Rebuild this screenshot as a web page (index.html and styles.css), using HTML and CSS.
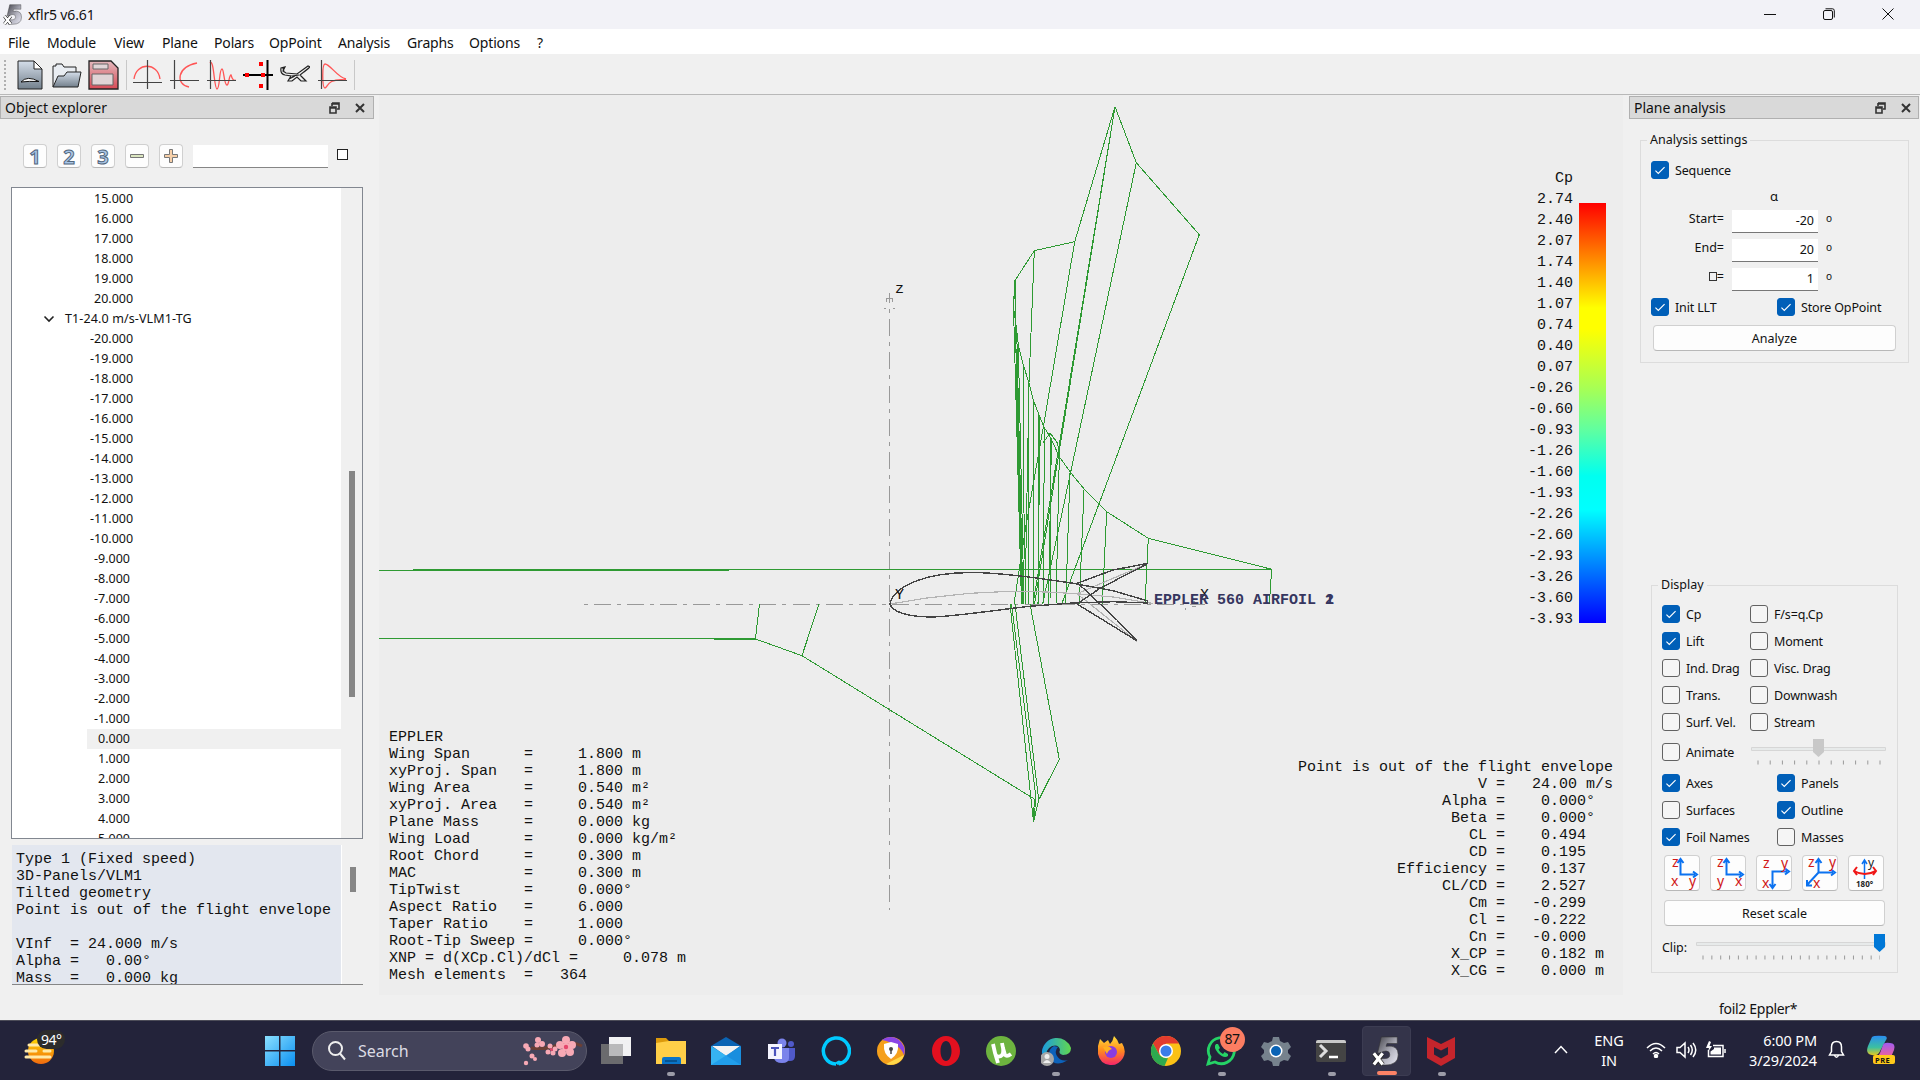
FILE: index.html
```html
<!DOCTYPE html>
<html lang="en">
<head>
<meta charset="utf-8">
<title>xflr5 v6.61</title>
<link rel="stylesheet" href="styles.css">
</head>
<body>
<svg class="defs" width="0" height="0">
  <defs>
    <linearGradient id="steel" x1="0" y1="0" x2="0" y2="1"><stop offset="0" stop-color="#d5deea"/><stop offset="1" stop-color="#73808c"/></linearGradient>
    <linearGradient id="rose" x1="0" y1="0" x2="0" y2="1"><stop offset="0" stop-color="#e3b9bd"/><stop offset="1" stop-color="#d84a56"/></linearGradient>
    <linearGradient id="silver" x1="0" y1="0" x2="1" y2="1"><stop offset="0" stop-color="#45454c"/><stop offset=".6" stop-color="#b8b8c4"/><stop offset="1" stop-color="#e8e8f4"/></linearGradient>
    <linearGradient id="win" x1="0" y1="0" x2="1" y2="1"><stop offset="0" stop-color="#8be0ff"/><stop offset="1" stop-color="#0a8ff0"/></linearGradient>
    <linearGradient id="sun" x1="0" y1="0" x2="0" y2="1"><stop offset="0" stop-color="#ffd800"/><stop offset="1" stop-color="#f06a10"/></linearGradient>
    <linearGradient id="edge" x1="0" y1="0" x2="1" y2="0"><stop offset="0" stop-color="#1a9be0"/><stop offset="1" stop-color="#62d84e"/></linearGradient>
    <linearGradient id="fire" x1="0" y1="0" x2="0" y2="1"><stop offset="0" stop-color="#ffe03a"/><stop offset=".5" stop-color="#ff8a1e"/><stop offset="1" stop-color="#f5246a"/></linearGradient>
    <linearGradient id="copA" x1="0" y1="0" x2="0" y2="1"><stop offset="0" stop-color="#2a8df0"/><stop offset=".6" stop-color="#3cc0a0"/><stop offset="1" stop-color="#e6c820"/></linearGradient>
    <linearGradient id="copB" x1="0" y1="0" x2="0" y2="1"><stop offset="0" stop-color="#a05cf0"/><stop offset="1" stop-color="#f0609a"/></linearGradient>
    <symbol id="float" viewBox="0 0 11 12"><path d="M3 1h7v6H8M3 1v3M3 2h7" fill="none" stroke="#333" stroke-width="1.6"/><path d="M1 5h6v6H1zM1 6h6" fill="none" stroke="#333" stroke-width="1.6"/></symbol>
    <symbol id="cross" viewBox="0 0 10 10"><path d="M1 1l8 8M9 1L1 9" stroke="#333" stroke-width="2" fill="none"/></symbol>
    <symbol id="logo5" viewBox="0 0 30 32"><path d="M10 1H27V8H16L15 11Q28 9 28 20Q28 31 14 31H8V24H14Q19 24 19 20Q19 16 15 16Q12 16 9 18H6Z" fill="url(#silver)" stroke="#333" stroke-width=".6"/><path d="M2 18.500L11.500 30.500M11.500 18.500L2 30.500" stroke="#222" stroke-width="5"/><path d="M2 18.500L11.500 30.500M11.500 18.500L2 30.500" stroke="#fff" stroke-width="3.400"/></symbol>
  </defs>
</svg>

<header class="titlebar">
  <svg class="app-icon" width="20" height="21" viewBox="0 0 30 32"><use href="#logo5"/></svg>
  <span class="app-title">xflr5 v6.61</span>
  <div class="win-controls">
    <svg width="12" height="12" viewBox="0 0 12 12"><path d="M0 6.500h12"/></svg>
    <svg width="12" height="12" viewBox="0 0 12 12"><rect x=".5" y="2.500" width="9" height="9" rx="1.500"/><path d="M2.500 .8H9.500Q11.300 .8 11.300 2.600V9.500"/></svg>
    <svg width="12" height="12" viewBox="0 0 12 12"><path d="M.5 .5l11 11M11.500 .5l-11 11"/></svg>
  </div>
</header>

<nav class="menubar">
  <span>File</span><span>Module</span><span>View</span><span>Plane</span><span>Polars</span><span>OpPoint</span><span>Analysis</span><span>Graphs</span><span>Options</span><span>?</span>
</nav>

<div class="toolbar">
  <i class="grip"></i>
  <svg class="tool" width="30" height="30" viewBox="0 0 30 30"><path d="M3 1H19L27 9V29H3Z" fill="url(#steel)" stroke="#222"/><path d="M19 1V9H27Z" fill="#fff" stroke="#222"/><path d="M6 22Q12 15 24 21.500Q14 21 6 22Z" fill="#fff" stroke="#111"/></svg>
  <svg class="tool" width="32" height="30" viewBox="0 0 32 30"><path d="M3 27V6H6V4H12L14 7H26V12" fill="#e9edf2" stroke="#222"/><path d="M3 27L8 16H14L17 12H31L28 27Z" fill="url(#steel)" stroke="#222"/></svg>
  <svg class="tool" width="32" height="30" viewBox="0 0 32 30"><path d="M2 1H24L31 8V29H2Z" fill="url(#rose)" stroke="#222" stroke-width="1.300"/><path d="M6 4H21V9H6ZM5 14H26V25H5Z" fill="#e0d4d6" stroke="#666"/></svg>
  <i class="tsep"></i>
  <svg class="tool ax" width="30" height="30" viewBox="0 0 30 30"><path class="r" d="M2 19C4 2 26 2 28 19"/><path d="M1 22.500H30M15.500 0V29"/></svg>
  <svg class="tool ax" width="30" height="30" viewBox="0 0 30 30"><path class="r" d="M28 3C8 7 6 24 20 27"/><path d="M1 20.500H30M5.500 0V29"/></svg>
  <svg class="tool ax" width="30" height="30" viewBox="0 0 30 30"><path class="r" d="M4 3C8 -2 8 29 11 29C14 29 13 9 16 9C18 9 18 25 21 25C23 25 23 15 25 15Q27 22 30 20"/><path d="M1 20.500H30M4.500 0V29"/></svg>
  <svg class="tool" width="30" height="30" viewBox="0 0 30 30"><path d="M0 15H30M24.500 0V30" stroke="#000" stroke-width="2"/><path d="M2 13h4v4H2zM18 13h4v4h-4zM16 2h4v4h-4zM16 24h4v4h-4z" fill="#f00"/></svg>
  <svg class="tool" width="30" height="30" viewBox="0 0 30 30"><path d="M1 8Q0 14 5 15L11 16L8 21L12 21L17 17L21 21L26 21L20 15L30 7L28 6L17 14L6 13L3 11L5 7ZM12 16L19 15M9 19L15 16M3 8L4 12M24 12L29 8" fill="none" stroke="#222" stroke-width="1.200"/></svg>
  <svg class="tool ax" width="30" height="30" viewBox="0 0 30 30"><path class="r" d="M29 19C20 17 13 4 8 4C5 4 5 28 8 28C11 28 9 18 29 20"/><path d="M1 20.500H30M4.500 0V29"/></svg>
  <i class="tsep last"></i>
</div>

<main class="work">
  <aside class="dock left">
    <div class="dock-title"><span>Object explorer</span><svg width="11" height="12"><use href="#float"/></svg><svg width="10" height="10"><use href="#cross"/></svg></div>
    <div class="explorer-tools">
      <button class="lvl">1</button><button class="lvl">2</button><button class="lvl">3</button>
      <button><svg width="16" height="16" viewBox="0 0 16 16"><path d="M1.500 6.500h13v3h-13z" fill="#dbe6c0" stroke="#777"/></svg></button>
      <button><svg width="16" height="16" viewBox="0 0 16 16"><path d="M6.500 1.500h3v5h5v3h-5v5h-3v-5h-5v-3h5z" fill="#f6cfa8" stroke="#777"/></svg></button>
      <span class="filter"></span><i class="plain-box"></i>
    </div>
    <div class="tree">
      <ul>
        <li>15.000</li><li>16.000</li><li>17.000</li><li>18.000</li><li>19.000</li><li>20.000</li>
        <li class="parent"><svg width="12" height="8" viewBox="0 0 12 8"><path d="M1.500 1.500L6 6L10.500 1.500"/></svg>T1-24.0 m/s-VLM1-TG</li>
        <li class="n2">-20.000</li><li class="n2">-19.000</li><li class="n2">-18.000</li><li class="n2">-17.000</li><li class="n2">-16.000</li><li class="n2">-15.000</li><li class="n2">-14.000</li><li class="n2">-13.000</li><li class="n2">-12.000</li><li class="n2">-11.000</li><li class="n2">-10.000</li>
        <li class="n1">-9.000</li><li class="n1">-8.000</li><li class="n1">-7.000</li><li class="n1">-6.000</li><li class="n1">-5.000</li><li class="n1">-4.000</li><li class="n1">-3.000</li><li class="n1">-2.000</li><li class="n1">-1.000</li>
        <li class="p1 current">0.000</li><li class="p1">1.000</li><li class="p1">2.000</li><li class="p1">3.000</li><li class="p1">4.000</li><li class="p1">5.000</li>
      </ul>
      <div class="scroll"><i class="thumb"></i></div>
    </div>
    <div class="info">
      <pre>Type 1 (Fixed speed)
3D-Panels/VLM1
Tilted geometry
Point is out of the flight envelope

VInf  = 24.000 m/s
Alpha =   0.00°
Mass  =   0.000 kg</pre>
      <div class="scroll"><i class="thumb"></i></div>
    </div>
  </aside>

  <section class="view">
    <svg class="plot" width="1244" height="899" viewBox="379 96 1244 899">
      <g class="axis">
        <path d="M583 604.500H1205" stroke-dasharray="17 6 4 6.150" stroke-dashoffset="22.500"/>
        <path d="M889.500 319V910" stroke-dasharray="17 6 4 6.300"/>
        <path d="M889.500 293V303M889.500 309V313M886.500 302V298.500H892.500V302M884 308.500H886M893 308.500H895M1192 606.500H1196M1198 603L1191 601M1185 608V610"/>
      </g>
      <g class="lift">
        <path d="M1014.700 281L1034.300 250.700L1074.700 241.700L1115 106.700L1136.300 162.700L1199.300 234.700L1061.700 604"/>
        <path d="M1136.300 162.700L1042.700 604M1115 106.700L1033 604M1115 106.700L1034.500 604M1074.700 241.700L1044 423L1025.700 527L1014 604M1034.300 250.700L1029 383L1025 604M1014.700 281L1016.700 390L1022.500 604"/>
        <path d="M1014.700 281L1013.500 307L1016.700 330L1018.300 345L1023.300 365L1029 383L1033.300 400L1039 415L1044 427L1050.700 438L1059.300 456.700L1070.700 472.700L1085 490L1106.700 511.700L1148.300 538.300L1271.700 569.300L1269.300 604"/>
        <path d="M1013.500 307L1021.500 604M1015.500 281V330L1023 604M1016.700 330L1023 604M1018.300 345L1024 604M1023.500 365V490L1026 604M1029 383L1028.500 604M1033.500 400V604M1039 415L1038 604M1039.500 415L1038.500 604M1044.500 427L1043 604M1050.500 438V598M1051.500 438L1048.500 604M1059.300 457L1056 604M1070 473L1065.700 604M1084 490L1079.300 604M1106.700 511.700L1102.300 604M1148.300 538.300L1145 604"/>
        <path d="M1043 443L1050 433L1057.500 443L1060 457"/>
        <path d="M379 570.500H729M413 569.500H1271M379 638.500H755.500L759.500 604M714 639.500H757L802 655.700L819 604M802 655.700L1034.300 799L1033.500 822"/>
        <path d="M1010 604L1033.500 822L1038.700 800L1059.300 759.300L1030 604M1011.500 604L1036 798L1033.500 822M1015 604L1038.700 800"/>
      </g>
      <g class="camber">
        <path d="M890 604L927 598L970 593.300L1010 591.300L1047 592L1077 593.700L1113 597L1153 603.500"/>
        <path d="M1077 593.700L1148.300 563.300M1077 593.700L1090 604L1137.300 641.700"/>
      </g>
      <g class="foil">
        <path d="M890 604C891 596 900 587 917 580.700C935 574 960 571.500 987 573C1020 575 1045 579 1073 583.300L1113 590.700L1148 601"/>
        <path d="M890 604C892 611 905 617 933 617C960 616 1010 608 1033 606L1073 603L1113 601.700L1148 603"/>
        <path d="M1077 583.300L1113 570L1148.300 563.300M1077 604L1100 588.300L1148.300 563.300M1078 583.300L1117 620L1136.700 640.700M1077 604L1136.700 640.700"/>
      </g>
      <g class="plot-text">
        <text x="895" y="293">z</text><text x="895" y="599">Y</text><text x="1200" y="599">X</text>
        <g class="foil-name"><text x="1154" y="604">EPPLER 560 AIRFOIL 1</text><text x="1325" y="604">2</text></g>
      </g>
    </svg>
    <pre class="wing-data">EPPLER
Wing Span      =     1.800 m
xyProj. Span   =     1.800 m
Wing Area      =     0.540 m²
xyProj. Area   =     0.540 m²
Plane Mass     =     0.000 kg
Wing Load      =     0.000 kg/m²
Root Chord     =     0.300 m
MAC            =     0.300 m
TipTwist       =     0.000°
Aspect Ratio   =     6.000
Taper Ratio    =     1.000
Root-Tip Sweep =     0.000°
XNP = d(XCp.Cl)/dCl =     0.078 m
Mesh elements  =   364</pre>
    <pre class="opp-data">Point is out of the flight envelope
                    V =   24.00 m/s
                Alpha =    0.000°
                 Beta =    0.000°
                   CL =    0.494
                   CD =    0.195
           Efficiency =    0.137
                CL/CD =    2.527
                   Cm =   -0.299
                   Cl =   -0.222
                   Cn =   -0.000
                 X_CP =    0.182 m
                 X_CG =    0.000 m</pre>
    <div class="legend">
      <pre>Cp
2.74
2.40
2.07
1.74
1.40
1.07
0.74
0.40
0.07
-0.26
-0.60
-0.93
-1.26
-1.60
-1.93
-2.26
-2.60
-2.93
-3.26
-3.60
-3.93</pre>
      <i class="ramp"></i>
    </div>
  </section>

  <aside class="dock right">
    <div class="dock-title"><span>Plane analysis</span><svg width="11" height="12"><use href="#float"/></svg><svg width="10" height="10"><use href="#cross"/></svg></div>
    <fieldset class="group analysis">
      <legend>Analysis settings</legend>
      <label class="ck on">Sequence</label>
      <div class="alpha">α</div>
      <div class="row"><span>Start=</span><b>-20</b><em>o</em></div>
      <div class="row"><span>End=</span><b>20</b><em>o</em></div>
      <div class="row"><span><i class="tofu"></i>=</span><b>1</b><em>o</em></div>
      <div class="pair"><label class="ck on">Init LLT</label><label class="ck on">Store OpPoint</label></div>
      <button class="wide">Analyze</button>
    </fieldset>
    <fieldset class="group display">
      <legend>Display</legend>
      <div class="grid-a">
        <label class="ck on">Cp</label><label class="ck">F/s=q.Cp</label>
        <label class="ck on">Lift</label><label class="ck">Moment</label>
        <label class="ck">Ind. Drag</label><label class="ck">Visc. Drag</label>
        <label class="ck">Trans.</label><label class="ck">Downwash</label>
        <label class="ck">Surf. Vel.</label><label class="ck">Stream</label>
      </div>
      <div class="animate"><label class="ck">Animate</label>
        <svg width="135" height="26" viewBox="0 0 135 26"><path class="track" d="M.5 8.500h134v3H.5z"/><path d="M62 0h11v13l-5.500 5l-5.500-5z" fill="#c8c8c8"/><path class="ticks" d="M6.500 23.500H129.500" stroke-dasharray="1 11.200"/></svg>
      </div>
      <div class="grid-b">
        <label class="ck on">Axes</label><label class="ck on">Panels</label>
        <label class="ck">Surfaces</label><label class="ck on">Outline</label>
        <label class="ck on">Foil Names</label><label class="ck">Masses</label>
      </div>
      <div class="views">
        <button><svg width="34" height="34" viewBox="0 0 34 34"><path d="M15.500 4V18.500H30M12.500 7L15.500 3L18.500 7M28 15.500L32 18.500L28 21.500"/><text x="7" y="11">z</text><text x="6" y="30">x</text><text x="24" y="30">y</text></svg></button>
        <button><svg width="34" height="34" viewBox="0 0 34 34"><path d="M15.500 4V18.500H30M12.500 7L15.500 3L18.500 7M28 15.500L32 18.500L28 21.500"/><text x="6" y="11">z</text><text x="6" y="30">y</text><text x="24" y="30">x</text></svg></button>
        <button><svg width="34" height="34" viewBox="0 0 34 34"><path d="M15.500 31V15.500H30M12.500 28L15.500 32L18.500 28M28 12.500L32 15.500L28 18.500"/><text x="6" y="12">z</text><text x="5" y="32">x</text><text x="24" y="12">y</text></svg></button>
        <button><svg width="34" height="34" viewBox="0 0 34 34"><path d="M15.500 4V16.500H30M15.500 16.500L4 29M12.500 7L15.500 3L18.500 7M28 13.500L32 16.500L28 19.500M4 24V29.500H9"/><text x="5" y="11">z</text><text x="10" y="32">x</text><text x="26" y="11">y</text></svg></button>
        <button><svg width="34" height="34" viewBox="0 0 34 34"><path class="thin" d="M15.500 5V23M13 8L15.500 4L18 8"/><path d="M5 15Q15.500 21 27 15M8 11L5 15L8 19M24 11L27 15L24 19" class="turn"/><text x="19" y="11" class="sm">y</text><text x="7" y="31" class="deg">180°</text></svg></button>
      </div>
      <button class="wide">Reset scale</button>
      <div class="clip"><span>Clip:</span>
        <svg width="190" height="26" viewBox="0 0 190 26"><path class="track" d="M.5 8.500h189v3H.5z"/><path d="M178 0h11v13l-5.500 5l-5.500-5z" fill="#0078d7"/><path class="ticks" d="M6.500 23.500H184" stroke-dasharray="1 7.850"/></svg>
      </div>
    </fieldset>
  </aside>
</main>

<div class="statusbar"><span>foil2 Eppler*</span></div>

<footer class="taskbar">
  <div class="weather">
    <svg width="56" height="40" viewBox="0 0 56 40"><circle cx="21" cy="21" r="13" fill="url(#sun)"/><path d="M9 15h15M6 21h10M24 21h6M6 27h24" stroke="#ffe9a8" stroke-width="3" stroke-linecap="round"/><rect x="17" y="0" width="28" height="19" rx="9.500" fill="#2c2c2c"/><text x="21" y="14.500" class="temp">94°</text></svg>
  </div>
  <svg class="start" width="30" height="30" viewBox="0 0 30 30"><path d="M0 0h14v14H0zM15.500 0H30v14H15.500zM0 15.500h14V30H0zM15.500 15.500H30V30H15.500z" fill="url(#win)"/></svg>
  <div class="search">
    <svg width="20" height="20" viewBox="0 0 20 20"><circle cx="8.500" cy="7.500" r="6.500" fill="none" stroke="#eee" stroke-width="2"/><path d="M13 12.500L18 18.500" stroke="#eee" stroke-width="2"/></svg>
    <span>Search</span>
    <svg width="62" height="32" viewBox="0 -1 62 32"><path d="M9 12Q24 14 36 9T60 10" stroke="#6b3f35" stroke-width="3" fill="none"/><g fill="#f7a9b5"><circle cx="4" cy="10" r="2.800"/><circle cx="6" cy="13" r="2.500"/><circle cx="16" cy="4" r="3"/><circle cx="20" cy="8" r="3"/><circle cx="15" cy="9" r="2.500"/><circle cx="28" cy="10" r="2.500"/><circle cx="33" cy="13" r="2.500"/><circle cx="31" cy="17" r="2.500"/><circle cx="26" cy="16" r="2.500"/><circle cx="44" cy="4" r="4"/><circle cx="50" cy="9" r="4"/><circle cx="48" cy="16" r="4"/><circle cx="40" cy="17" r="4"/><circle cx="38" cy="9" r="4"/><circle cx="44" cy="11" r="4"/><circle cx="10" cy="20" r="2.500"/><circle cx="13" cy="23" r="2"/><circle cx="4" cy="27" r="2.200"/></g><circle cx="44" cy="11" r="2.200" fill="#e5476c"/><circle cx="29.500" cy="13.500" r="1.500" fill="#e5476c"/></svg>
  </div>
  <div class="apps">
    <span class="app"><svg viewBox="0 0 30 30"><path d="M0 8h22v20H0z" fill="#6b6b6e"/><path d="M8 1h22v19H8z" fill="#f1f1f3"/><path d="M8 8h14v12H8z" fill="#b9b9bb"/></svg></span>
    <span class="app run"><svg viewBox="0 0 30 30"><path d="M0 2h10l3 3h17v5H0z" fill="#dc9a0c"/><path d="M0 7l13-2h17v23H0z" fill="#ffcf48"/><path d="M6 28v-5q0-2 2-2h15q2 0 2 2v5z" fill="#0a74c8"/><path d="M9 25h12" stroke="#064a80" stroke-width="1.500"/></svg></span>
    <span class="app"><svg viewBox="0 0 30 30"><path d="M0 10L15 1L30 10V29H0z" fill="#0b64b4"/><path d="M1 10H29L15 20z" fill="#f3f3f3"/><path d="M0 10L30 29H0z" fill="#36b4f2"/><path d="M30 10L0 29H30z" fill="#1d98e8" opacity=".8"/></svg></span>
    <span class="app"><svg viewBox="0 0 30 30"><circle cx="16" cy="7" r="4.500" fill="#7b83eb"/><circle cx="25" cy="8" r="3" fill="#5059c9"/><path d="M20 12h9v8q0 5-5 5h-4z" fill="#5059c9"/><path d="M8 12h15v10q0 5-7 5t-8-5z" fill="#7b83eb"/><path d="M2 8h14v15H2z" fill="#f4f4ff"/><path d="M5 12h8M9 12v8" stroke="#4b53bc" stroke-width="2.200"/></svg></span>
    <span class="app"><svg viewBox="0 0 30 30"><path d="M15 28A13 13 0 1 1 19 27.500Q18 25 15.500 28" fill="none" stroke="#00caff" stroke-width="3.500"/></svg></span>
    <span class="app"><svg viewBox="0 0 30 30"><circle cx="15" cy="15" r="14" fill="#f5a01c"/><path d="M6 4A14 14 0 0 1 28 19Q24 8 6 4z" fill="#8a45e6"/><path d="M28 19A14 14 0 0 1 10 28Z" fill="#ffd84a"/><path d="M8 8L15 6L22 8Q23 18 15 23Q7 18 8 8z" fill="#fff"/><circle cx="15" cy="13" r="2" fill="#444"/><path d="M15 13v5" stroke="#444" stroke-width="1.500"/></svg></span>
    <span class="app"><svg viewBox="0 0 30 30"><path fill-rule="evenodd" d="M15 0C23 0 29 7 29 15S23 30 15 30S1 23 1 15S7 0 15 0ZM15 5C12 5 9.500 9 9.500 15S12 25 15 25S20.500 21 20.500 15S18 5 15 5Z" fill="#e3101f"/></svg></span>
    <span class="app"><svg viewBox="0 0 30 30"><circle cx="15" cy="15" r="15" fill="#6db33f"/><path d="M7 8L9 17Q10 22 15 20Q18 18 17 12L16 7M17 12L19 19Q21 21 25 18M9 17L12 27" stroke="#fff" stroke-width="3.800" fill="none"/></svg></span>
    <span class="app run"><svg viewBox="0 0 30 30"><path d="M1 15A15 15 0 0 1 30 12Q30 19 22 19Q17 18 19 14Q18 8 11 10Q4 13 6 22Q0 19 1 15z" fill="url(#edge)"/><path d="M13 10Q6 14 9 22Q14 32 27 24Q20 26 16 20Q13 15 17 11z" fill="#0d62ba"/><circle cx="6" cy="23" r="7" fill="#a7a7a7"/><circle cx="6" cy="20.500" r="2.500" fill="#eee"/><path d="M2 27q4-6 8 0z" fill="#eee"/></svg></span>
    <span class="app"><svg viewBox="0 0 30 30"><path d="M2 10L4 3L8 7L12 4L14 8Q17 5 18 0Q22 4 23 8L26 7Q31 15 27 22Q22 30 14 29Q4 28 2 18z" fill="url(#fire)"/><circle cx="15" cy="16" r="6" fill="#8a3ce0"/><path d="M7 11Q13 9 16 13Q12 14 11 18Q9 15 7 11z" fill="#ffb020"/></svg></span>
    <span class="app"><svg viewBox="0 0 30 30"><circle cx="15" cy="15" r="15" fill="#fbc116"/><path d="M2 7.500A15 15 0 0 1 28 7.500H15L8.500 19z" fill="#e33b2e"/><path d="M2 7.500L8.500 19Q12 23 17 22L13.500 30A15 15 0 0 1 2 7.500z" fill="#2da94f"/><circle cx="15" cy="15" r="7" fill="#fff"/><circle cx="15" cy="15" r="5.500" fill="#3b7de8"/></svg></span>
    <span class="app run"><svg viewBox="0 0 30 30"><path d="M2 28L4 21A13 13 0 1 1 9 26z" fill="none" stroke="#25d366" stroke-width="2.800"/><path d="M10 8Q7 11 12 17Q18 23 22 20L22 18L18.500 16L17 18Q14 17 12.500 13.500L14 12L12 8z" fill="#25d366"/></svg><em>87</em></span>
    <span class="app"><svg viewBox="0 0 30 30"><path d="M12 1h6l1 4l4 2l4-1l3 5l-3 3v3l3 3l-3 5l-4-1l-4 2l-1 4h-6l-1-4l-4-2l-4 1l-3-5l3-3v-3L0 11l3-5l4 1l4-2z" fill="#76828d"/><circle cx="15" cy="15" r="6.500" fill="#fff"/><circle cx="15" cy="15" r="5" fill="#0a63b5"/></svg></span>
    <span class="app run"><svg viewBox="0 0 30 30"><rect y="4" width="30" height="22" rx="2" fill="#444"/><path d="M0 6q0-2 2-2h26q2 0 2 2v1H0z" fill="#c9c9c9"/><path d="M4 9l6 6l-6 6" stroke="#ddd" stroke-width="3" fill="none"/><path d="M13 21h9" stroke="#fff" stroke-width="2.500"/></svg></span>
    <span class="app active"><svg viewBox="0 0 30 32"><use href="#logo5"/></svg></span>
    <span class="app run"><svg viewBox="0 0 30 30"><path d="M1 1L15 8L29 1V22L15 30L1 22zM8 11V18.500L15 22.500L22 18.500V11L15 14.500z" fill="#c5252c" fill-rule="evenodd"/></svg></span>
  </div>
  <div class="tray">
    <svg class="caret" width="14" height="9" viewBox="0 0 14 9"><path d="M1 8L7 1.500L13 8"/></svg>
    <div class="lang">ENG<br>IN</div>
    <svg class="wifi" width="20" height="16" viewBox="0 0 20 16"><path d="M1 6Q10 -3 19 6M4 9Q10 3 16 9M7 12Q10 9 13 12"/><circle cx="10" cy="14" r="1.500" fill="#fff"/></svg>
    <svg class="vol" width="21" height="18" viewBox="0 0 21 18"><path d="M1 6.500H4L9 2V16L4 11.500H1zM12 6Q14 9 12 12M14.500 4Q18 9 14.500 14M17 2Q22.500 9 17 16"/></svg>
    <svg class="bat" width="21" height="17" viewBox="0 0 21 17"><path d="M7 4.500H17V15.500H2.500V9M19 8V12"/><path d="M8 6.500h7v7H4.500V10.500L8 8zM3 0L0 7H3L2 11L6 5H3.500L5 1z" fill="#fff" stroke="none"/></svg>
    <div class="clock">6:00 PM<br>3/29/2024</div>
    <svg class="bell" width="17" height="19" viewBox="0 0 17 19"><path d="M1.500 15H15.500L13.500 11.500V7Q13.500 1.500 8.500 1.500T3.500 7V11.500zM6.500 15.500Q8.500 19 10.500 15.500"/></svg>
    <svg class="cop" width="30" height="30" viewBox="0 0 30 30"><path d="M6 2Q8 0 19 1Q22 2 20 5L13 18Q11 21 6 20Q-1 19 2 11z" fill="url(#copA)"/><path d="M17 10Q18 7 24 8Q30 8 28 15L25 22H10Q13 21 14 18z" fill="url(#copB)"/><rect x="7" y="20" width="22" height="9" rx="2" fill="#ffc91a"/><text x="9" y="27.500" class="pre">PRE</text></svg>
  </div>
</footer>
</body>
</html>
```
FILE: styles.css
```css
* { box-sizing: border-box; }
body { margin: 0; width: 1920px; height: 1080px; overflow: hidden; display: flex; flex-direction: column; background: #f0f0f0; color: #111; font-family: "Noto Sans", "Open Sans", sans-serif; font-size: 12.5px; }
pre { margin: 0; font: 15px/17px "Liberation Mono", monospace; }
button { padding: 0; border: 1px solid #d0d0d0; border-bottom-color: #b8b8b8; border-radius: 4px; background: #fdfdfd; font: inherit; color: #111; display: flex; align-items: center; justify-content: center; }
svg { display: block; flex: none; }
.defs { position: absolute; }

.titlebar { height: 29px; flex: none; background: #f2f2f7; display: flex; align-items: center; padding: 0 26px 1px 3px; }
.app-title { font-size: 14px; margin-left: 5px; letter-spacing: -.15px; }
.win-controls { margin-left: auto; display: flex; gap: 47px; }
.win-controls svg { fill: none; stroke: #111; stroke-width: 1; }
.menubar { height: 26px; flex: none; background: #fff; border-bottom: 1px solid #f0f0f0; padding-left: 8px; display: grid; grid-template-columns: 39px 67px 48px 52px 55px 69px 69px 62px 68px 20px; font-size: 14px; line-height: 27px; letter-spacing: -.15px; white-space: nowrap; }
.toolbar { height: 40px; flex: none; border-bottom: 1px solid #b8b8b8; display: flex; align-items: center; background: #f0f0f0; }
.grip { width: 2px; height: 30px; margin: 0 9px 0 4px; background: repeating-linear-gradient(#b0b0b0 0 2px, transparent 2px 4px); }
.tool { margin-right: 7px; fill: none; }
.tool:nth-of-type(1) { margin-right: 5px; }
.tool:nth-of-type(2) { margin-right: 5px; }
.ax path { fill: none; stroke: #444; stroke-width: 1.2; }
.ax .r { stroke: #f55; stroke-width: 1.3; }
.tsep { width: 1px; height: 30px; background: #c8c8c8; margin-right: 5px; }
.tsep.last { margin: 0; }

.work { height: 900px; flex: none; display: flex; }
.dock { padding-top: 1px; }
.left { width: 379px; }
.dock-title { height: 23px; border: 1px solid #b0b0b0; background: #d9d9d9; display: flex; align-items: center; padding: 0 8px 0 4px; font-size: 14px; letter-spacing: .05px; }
.left .dock-title { width: 374px; }
.dock-title span { flex: 1; }
.dock-title svg + svg { margin-left: 15px; }
.explorer-tools { display: flex; align-items: center; margin: 25px 0 0 23px; gap: 10px; height: 24px; }
.explorer-tools button { width: 24px; height: 24px; }
.explorer-tools .lvl { font: bold 20px "Noto Sans", sans-serif; color: #a9c6e8; -webkit-text-stroke: 1px #53677d; }
.filter { width: 135px; height: 23px; background: #fff; border-bottom: 1px solid #868686; }
.plain-box { width: 11px; height: 11px; border: 1px solid #222; margin: 0 0 3px -1px; background: #fff; }

.tree { margin: 19px 0 0 11px; width: 352px; height: 652px; border: 1px solid #828790; background: #fff; display: flex; overflow: hidden; }
.tree ul { margin: 0; padding: 1px 0 0; list-style: none; flex: 1; }
.tree li { height: 20px; line-height: 20px; padding-left: 7px; margin-left: 75px; letter-spacing: 0; white-space: nowrap; }
.tree .n2 { padding-left: 3px; }
.tree .n1 { padding-left: 7px; }
.tree .p1 { padding-left: 11px; }
.tree .current { background: #f0f0f0; }
.tree .parent { margin-left: 31px; padding: 0; display: flex; align-items: center; gap: 10px; letter-spacing: .12px; }
.parent svg { fill: none; stroke: #222; stroke-width: 1.6; }
.scroll { width: 21px; background: #f0f0f0; padding-left: 8px; }
.thumb { display: block; width: 6px; background: #868686; }
.tree .thumb { margin-top: 283px; height: 226px; }
.info { margin: 6px 0 0 12px; width: 351px; height: 140px; border-bottom: 1px solid #868686; display: flex; overflow: hidden; background: #e3e7ef; }
.info pre { flex: 1; padding: 6px 0 0 4px; }
.info .scroll { width: 22px; border-left: 1px solid #fff; }
.info .thumb { margin-top: 22px; height: 25px; }

.view { width: 1244px; height: 900px; background: #ededed; position: relative; }
.plot { position: absolute; left: 0; top: 1px; }
.plot path { fill: none; stroke-width: 1; shape-rendering: crispEdges; }
.plot .axis path { stroke: #999; }
.plot .lift path { stroke: #2e9a33; }
.plot .foil path { stroke: #444; stroke-width: 1.4; }
.plot .camber path { stroke: #b4b4b4; stroke-width: 1.2; }
.plot-text { font: 15px "Liberation Mono", monospace; fill: #111; }
.foil-name { font-weight: bold; fill: #36365f; }
.wing-data { position: absolute; left: 10px; bottom: 11px; }
.opp-data { position: absolute; left: 919px; bottom: 15px; }
.legend { position: absolute; right: 17px; top: 73px; display: flex; gap: 6px; }
.legend pre { line-height: 21px; text-align: right; }
.ramp { width: 27px; height: 420px; margin-top: 35px; background: linear-gradient(#f00, #ff9000 14%, #ff0 25%, #ff0 30%, #a8ff54 44%, #60ffa0 54%, #00fff0 65%, #0ff 73%, #00f); }

.right { width: 297px; padding-left: 6px; }
.right .dock-title { margin-right: 1px; padding-right: 7px; letter-spacing: -.05px; }
.group { position: relative; border: 1px solid #dcdcdc; margin: 0; padding: 0; min-width: 0; }
.group legend { position: absolute; top: -10px; left: 6px; padding: 0 3px; background: #f0f0f0; line-height: 18px; }
.ck { display: flex; align-items: center; gap: 6px; height: 16px; white-space: nowrap; letter-spacing: -.15px; }
.ck::before { content: ""; width: 16px; height: 16px; flex: none; border: 1px solid #626262; border-radius: 3px; background: #f5f5f5; }
.ck.on::before { border-color: #005fb8; background: #005fb8 url("data:image/svg+xml,%3Csvg xmlns='http://www.w3.org/2000/svg' viewBox='0 0 14 14'%3E%3Cpath d='M3 7.500l2.500 2.500L11 4.500' fill='none' stroke='white'/%3E%3C/svg%3E"); }
.analysis { margin: 21px 0 0 11px; width: 269px; height: 223px; padding: 21px 11px 0 10px; }
.alpha { text-align: center; height: 20px; line-height: 20px; margin: 8px 0 4px; font-size: 13px; }
.row { display: grid; grid-template-columns: 73px 86px 10px; column-gap: 8px; height: 22px; margin-bottom: 7px; }
.row span { text-align: right; line-height: 17px; }
.row b { font-weight: normal; background: #fff; border-bottom: 1px solid #777; text-align: right; line-height: 22px; padding-right: 4px; }
.row em { font-style: normal; font-size: 10px; line-height: 17px; }
.tofu { display: inline-block; width: 8px; height: 9px; border: 1px solid #333; }
.pair { display: grid; grid-template-columns: 126px 1fr; margin-top: 9px; }
.wide { width: 100%; height: 26px; }
.analysis .wide { width: 243px; margin: 10px 0 0 2px; }
.display { margin: 222px 0 0 22px; width: 247px; height: 388px; padding: 20px 11px 0 10px; }
.grid-a { display: grid; grid-template-columns: 88px 1fr; row-gap: 11px; }
.grid-b { display: grid; grid-template-columns: 115px 1fr; row-gap: 11px; margin-top: 10px; }
.animate { display: flex; justify-content: space-between; margin-top: 9px; height: 26px; }
.animate .ck { margin-top: 5px; }
.track { fill: #e7eaea; stroke: #d6d6d6; }
.ticks { stroke: #999; stroke-width: 4; }
.views { display: flex; gap: 10px; margin: 10px 0 0 2px; }
.views button { width: 36px; height: 36px; }
.views svg { overflow: visible; }
.views path { fill: none; stroke: #0b72f0; stroke-width: 2; }
.views .turn { stroke: #f01818; }
.views .thin { stroke-width: 1.5; }
.views text { font: 14px "Noto Sans", sans-serif; fill: #d01818; }
.views .sm { fill: #222; font-size: 12px; }
.views .deg { font-size: 8px; font-weight: bold; fill: #222; }
.display .wide { width: 221px; margin: 9px 0 0 2px; }
.clip { display: flex; justify-content: space-between; margin-top: 8px; }
.clip span { line-height: 28px; letter-spacing: -.1px; }
.statusbar { height: 25px; flex: none; padding-left: 1719px; font-size: 14px; line-height: 28px; letter-spacing: -.3px; }

.taskbar { height: 60px; flex: none; background: #23233a; border-top: 1px solid #4c4c58; display: flex; align-items: center; color: #fff; position: relative; }
.weather { width: 265px; padding-left: 20px; align-self: flex-start; margin-top: 9px; }
.temp { font: 14px "Noto Sans", sans-serif; fill: #fff; letter-spacing: -.5px; }
.search { margin-left: 17px; width: 275px; height: 40px; border-radius: 20px; background: #43435a; border: 1px solid #5a5a6c; display: flex; align-items: center; padding: 0 2px 0 14px; color: #dcdce4; font-size: 16px; }
.search span { flex: 1; margin-left: 11px; }
.apps { display: flex; margin-left: 1px; }
.app { position: relative; width: 55.05px; height: 50px; display: flex; align-items: center; justify-content: center; }
.app svg { width: 30px; height: 30px; }
.run::after { content: ""; position: absolute; bottom: 0; left: 24px; width: 8px; height: 4px; border-radius: 2px; background: #9c9ca8; }
.active::before { content: ""; position: absolute; inset: 0 3px; background: #34344a; border: 1px solid #3c3c52; border-radius: 4px; }
.active::after { content: ""; position: absolute; bottom: 1px; left: 18px; width: 20px; height: 4px; border-radius: 2px; background: #fb8266; }
.active svg { position: relative; }
.app em { position: absolute; left: 26px; top: 1px; width: 25px; height: 25px; border-radius: 50%; background: #fb7d62; color: #111; font-style: normal; font-size: 14px; line-height: 24px; text-align: center; letter-spacing: -.5px; }
.tray { margin-left: auto; display: flex; align-items: center; padding-right: 24px; font-size: 14.5px; line-height: 20px; height: 60px; }
.tray > svg { fill: none; stroke: #fff; stroke-width: 1.5; position: relative; top: -1px; }
.lang { width: 40px; margin: 0 17px 2px 21px; text-align: center; letter-spacing: -.1px; }
.wifi { margin-right: 10px; }
.vol { margin-right: 9px; }
.clock { width: 90px; margin-bottom: 2px; text-align: right; letter-spacing: -.1px; white-space: nowrap; }
.bell { margin: 0 21px 0 11px; }
.tray .cop { stroke: none; }
.pre { font: bold 7.5px "Noto Sans", sans-serif; fill: #111; letter-spacing: .5px; }
```
